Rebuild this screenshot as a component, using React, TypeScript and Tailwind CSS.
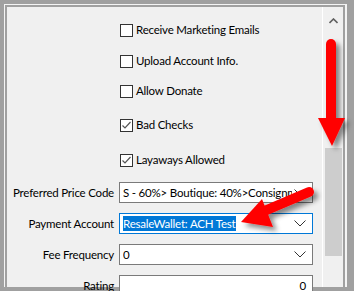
import React from "react";

const FONT = { fontFamily: 'Lato, "Liberation Sans", sans-serif' };

function Check({ checked, label, className }: { checked?: boolean; label: string; className?: string }) {
  return (
    <div className={`flex items-center h-[14px] ${className ?? ""}`}>
      <span className="w-[13px] h-[13px] border border-[#333] bg-white flex items-center justify-center shrink-0">
        {checked && (
          <svg width="11" height="11" viewBox="0 0 11 11">
            <path d="M1.5 5.5 L4 8 L9.5 2" fill="none" stroke="#555" strokeWidth="1.2" />
          </svg>
        )}
      </span>
      <span className="ml-[3px] text-[11.5px] tracking-[-0.2px] text-black leading-[14px] whitespace-nowrap">{label}</span>
    </div>
  );
}

function Chevron() {
  return (
    <svg width="12" height="7" viewBox="0 0 12 7" className="shrink-0">
      <path d="M0.5 0.5 L6 6 L11.5 0.5" fill="none" stroke="#333" strokeWidth="1" />
    </svg>
  );
}

function Combo({ text, active }: { text: string; active?: boolean }) {
  return (
    <div
      className={`h-[21px] w-[194px] bg-white border flex items-center pl-[3px] pr-[6px] ${
        active ? "border-[#0078d7]" : "border-[#7a7a7a]"
      }`}
    >
      <span className="flex-1 min-w-0 overflow-hidden whitespace-nowrap leading-[16px] mr-[2px]">
        {active ? <span className="bg-[#0078d7] text-white py-[1px]">{text}</span> : text}
      </span>
      <Chevron />
    </div>
  );
}

function Arrows() {
  return (
    <svg className="absolute left-0 top-0 pointer-events-none" width="354" height="291" viewBox="0 0 354 291">
      <defs>
        <filter id="sh" x="-30%" y="-30%" width="160%" height="160%">
          <feDropShadow dx="4" dy="4" stdDeviation="2.5" floodColor="#000" floodOpacity="0.45" />
        </filter>
      </defs>
      <g filter="url(#sh)" fill="#ff0000" stroke="none">
        <line x1="331" y1="44" x2="331" y2="122" stroke="#ff0000" strokeWidth="10" strokeLinecap="round" />
        <polygon points="318,118 345,118 332,146" />
        <line x1="309" y1="192" x2="262" y2="212" stroke="#ff0000" strokeWidth="10" strokeLinecap="round" />
        <polygon points="241,222 262,199 273,227" />
      </g>
    </svg>
  );
}

export default function App() {
  return (
    <div className="relative w-[354px] h-[291px] overflow-hidden bg-[#a0a0a0]" style={FONT}>
      <div className="absolute left-[4px] top-[4px] right-[7px] bottom-[4px] bg-[#f4f4f4] pl-[1px] pt-[1px] pr-[2px]">
        <div className="h-full border-l-2 border-t-2 border-r-2 border-[#a0a0a0] bg-[#f0f0f0] flex">
          {/* form */}
          <div className="w-[316px] pt-[16px]">
            <div className="pl-[113px] flex flex-col">
              <Check label="Receive Marketing Emails" />
              <Check label="Upload Account Info." className="mt-[17px]" />
              <Check label="Allow Donate" className="mt-[16px]" />
              <Check checked label="Bad Checks" className="mt-[20px]" />
              <Check checked label="Layaways Allowed" className="mt-[21px]" />
            </div>
            <div className="grid grid-cols-[107px_194px] gap-x-[5px] gap-y-[10px] mt-[15px] items-center text-[11.5px] tracking-[-0.2px] text-black">
              <span className="text-right whitespace-nowrap">Preferred Price Code</span>
              <Combo text="S - 60%> Boutique: 40%>Consignment" />
              <span className="text-right whitespace-nowrap">Payment Account</span>
              <Combo text="ResaleWallet: ACH Test" active />
              <span className="text-right whitespace-nowrap">Fee Frequency</span>
              <Combo text="0" />
              <span className="text-right whitespace-nowrap">Rating</span>
              <div className="h-[21px] w-[194px] bg-white border border-[#7a7a7a] flex items-center justify-end pr-[6px] leading-[16px]">
                0
              </div>
            </div>
          </div>
          {/* scrollbar */}
          <div className="w-[21px] border-l border-white bg-[#f0f0f0] flex flex-col items-center">
            <svg width="9" height="6" viewBox="0 0 9 6" className="mt-[11px]">
              <path d="M0.5 5 L4.5 1 L8.5 5" fill="none" stroke="#606060" strokeWidth="1.6" />
            </svg>
            <div className="mt-[124px] w-[17px] h-[108px] bg-[#cdcdcd]" />
          </div>
        </div>
      </div>
      <Arrows />
    </div>
  );
}
